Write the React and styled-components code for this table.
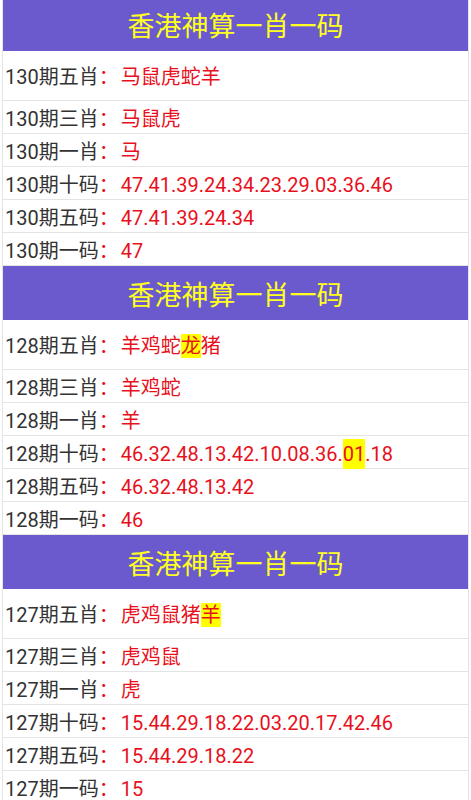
import React from "react";
import styled, { createGlobalStyle } from "styled-components";

const GlobalStyle = createGlobalStyle`
  html, body {
    margin: 0;
    padding: 0;
    background: #ffffff;
    overflow: hidden;
  }
  body {
    font-family: Roboto, "Noto Sans CJK SC", sans-serif;
  }
`;

const Page = styled.div`
  padding: 0 2px;
  margin-top: -3px;
`;

const Frame = styled.div`
  border-left: 1px solid #e4e4e4;
  border-right: 1px solid #e4e4e4;
`;

const Block = styled.section`
  display: flex;
  flex-direction: column;
`;

const Header = styled.h2`
  margin: 0;
  height: 54px;
  display: flex;
  align-items: center;
  justify-content: center;
  background: #6a5acd;
  color: #ffff22;
  font-family: "Noto Sans CJK SC", sans-serif;
  font-weight: 400;
  font-size: 27px;
  letter-spacing: 0;
`;

const Row = styled.div`
  display: flex;
  align-items: center;
  height: ${(p) => (p.$tall ? 49 : 32)}px;
  border-bottom: 1px solid #e4e4e4;
  padding-left: 2px;
  font-size: 20px;
  white-space: nowrap;
`;

const Label = styled.span`
  color: #333333;
`;

const Value = styled.span`
  color: #e8101c;
`;

const Colon = styled.span`
  display: inline-block;
  padding-right: 2px;
`;

const Hit = styled.span`
  background: #ffff00;
  padding: ${(p) => (p.$num ? "3px 0" : "0")};
`;

const blocks = [
  {
    issue: "130",
    rows: [
      ["五肖", "马鼠虎蛇羊"],
      ["三肖", "马鼠虎"],
      ["一肖", "马"],
      ["十码", "47.41.39.24.34.23.29.03.36.46"],
      ["五码", "47.41.39.24.34"],
      ["一码", "47"],
    ],
  },
  {
    issue: "128",
    rows: [
      ["五肖", "羊鸡蛇[龙]猪"],
      ["三肖", "羊鸡蛇"],
      ["一肖", "羊"],
      ["十码", "46.32.48.13.42.10.08.36.[01].18"],
      ["五码", "46.32.48.13.42"],
      ["一码", "46"],
    ],
  },
  {
    issue: "127",
    rows: [
      ["五肖", "虎鸡鼠猪[羊]"],
      ["三肖", "虎鸡鼠"],
      ["一肖", "虎"],
      ["十码", "15.44.29.18.22.03.20.17.42.46"],
      ["五码", "15.44.29.18.22"],
      ["一码", "15"],
    ],
  },
];

function renderValue(text) {
  const parts = text.split(/(\[[^\]]+\])/).filter(Boolean);
  return parts.map((part, i) => {
    if (part.startsWith("[")) {
      const inner = part.slice(1, -1);
      return (
        <Hit key={i} $num={/\d/.test(inner)}>
          {inner}
        </Hit>
      );
    }
    return <React.Fragment key={i}>{part}</React.Fragment>;
  });
}

export default function App() {
  return (
    <>
      <GlobalStyle />
      <Page>
        <Frame>
          {blocks.map((b) => (
            <Block key={b.issue}>
              <Header>香港神算一肖一码</Header>
              {b.rows.map(([kind, val]) => (
                <Row key={kind} $tall={kind === "五肖"}>
                  <Label>
                    {b.issue}期{kind}
                  </Label>
                  <Value>
                    <Colon>：</Colon>
                    {renderValue(val)}
                  </Value>
                </Row>
              ))}
            </Block>
          ))}
        </Frame>
      </Page>
    </>
  );
}
